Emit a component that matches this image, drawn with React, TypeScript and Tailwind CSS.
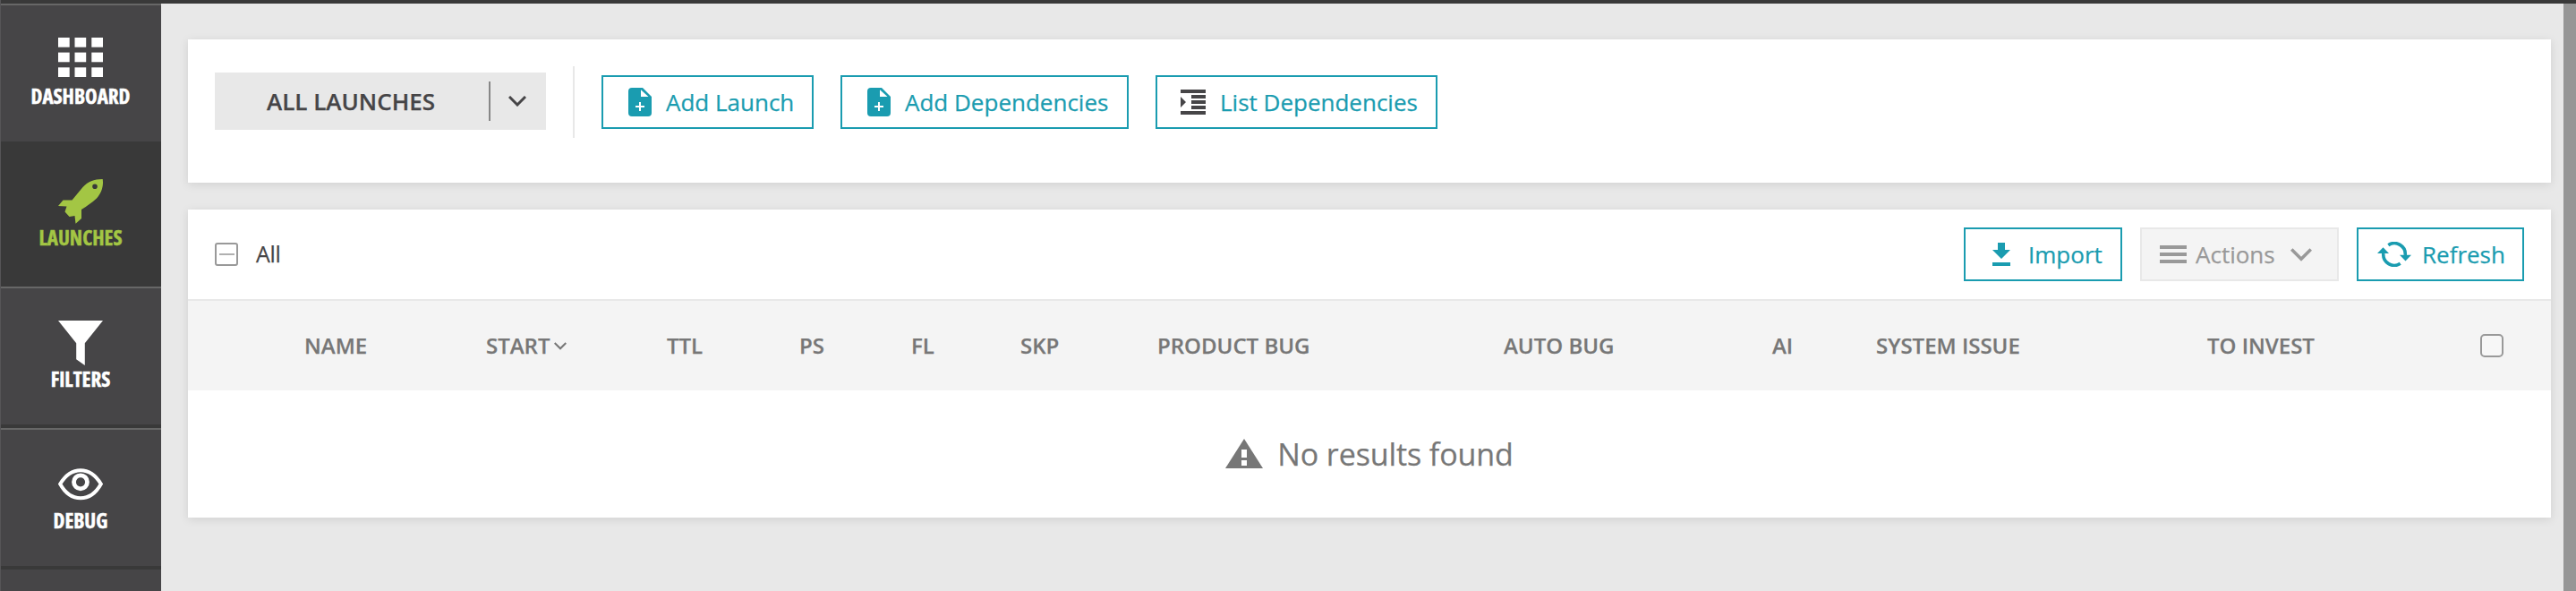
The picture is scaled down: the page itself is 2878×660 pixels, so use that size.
import React from "react";

type IconProps = { className?: string };

const GridIcon = ({ className }: IconProps) => (
  <svg className={className} width="50" height="50" viewBox="0 0 50 50" fill="currentColor">
    {[0, 16.6, 33.3].map((y) =>
      [0, 18.5, 37.3].map((x) => <rect key={`${x}-${y}`} x={x} y={y} width="12.7" height="10.7" />),
    )}
  </svg>
);

const RocketIcon = ({ className }: IconProps) => (
  <svg className={className} width="50" height="50" viewBox="0 0 50 50" fill="currentColor">
    <path
      fillRule="evenodd"
      d="M49.700 0C51 8 48 16 43 21.500C37 27 32 30 26 34V44L19.500 49.700L18.500 41L12.500 42L7.500 36.500L9.500 30.500L0 30L5.500 23.500H15.500L27.500 9C33 3 40 0 49.700 0ZM41 5.500A2.800 2.800 0 1 0 41 11.100A2.800 2.800 0 1 0 41 5.500Z"
    />
  </svg>
);

const FunnelIcon = ({ className }: IconProps) => (
  <svg className={className} width="50" height="50" viewBox="0 0 50 50" fill="currentColor">
    <path d="M0 0H50L29.800 25.300V50L20.200 43.300V25.300Z" />
  </svg>
);

const EyeIcon = ({ className }: IconProps) => (
  <svg className={className} width="50" height="36" viewBox="0 0 50 36" fill="none" stroke="currentColor">
    <path d="M2.200 17.500C8 8 15.500 2.300 25 2.300S42 8 47.800 17.500C42 28 34.500 33.200 25 33.200S8 28 2.200 17.500Z" strokeWidth="4" />
    <circle cx="25" cy="15.300" r="7.500" strokeWidth="4.800" />
  </svg>
);

const AddFileIcon = ({ className }: IconProps) => (
  <svg className={className} width="26" height="32" viewBox="0 0 26 32">
    <path d="M4 0H16L26 10V28A4 4 0 0 1 22 32H4A4 4 0 0 1 0 28V4A4 4 0 0 1 4 0Z" fill="currentColor" />
    <path d="M14 2.300V10H22.500ZM12 16H14V20H18V22H14V26H12V22H8V20H12Z" fill="#fff" />
  </svg>
);

const IndentIcon = ({ className }: IconProps) => (
  <svg className={className} width="28" height="28" viewBox="0 0 28 28" fill="currentColor">
    <path d="M0 0H28V4H0ZM12 6H28V10H12ZM12 12H28V16H12ZM12 18H28V22H12ZM0 24H28V28H0ZM0 8L6 14L0 20Z" />
  </svg>
);

const ImportIcon = ({ className }: IconProps) => (
  <svg className={className} width="20" height="26" viewBox="0 0 20 26" fill="currentColor">
    <path d="M6 0H14V8H20L10 18L0 8H6ZM0 22H20V26H0Z" />
  </svg>
);

const MenuIcon = ({ className }: IconProps) => (
  <svg className={className} width="30" height="20" viewBox="0 0 30 20" fill="currentColor">
    <path d="M0 0H30V4H0ZM0 8H30V12H0ZM0 16H30V20H0Z" />
  </svg>
);

const RefreshIcon = ({ className }: IconProps) => (
  <svg className={className} width="38" height="28" viewBox="0 0 38 28">
    <path d="M12.300 3.700A12.200 12.200 0 0 1 31.200 15M25.700 24.300A12.200 12.200 0 0 1 6.800 13" fill="none" stroke="currentColor" strokeWidth="3.600" />
    <path d="M25 14.700H38L31.500 21.500ZM0 13H13L6.500 6.200Z" fill="currentColor" />
  </svg>
);

const WarningIcon = ({ className }: IconProps) => (
  <svg className={className} width="42" height="33" viewBox="0 0 42 33">
    <path d="M21 0L42 33H0Z" fill="currentColor" />
    <path d="M18 12H24V21H18ZM18 24H24V30H18Z" fill="#fff" />
  </svg>
);

const Chevron = ({ className }: IconProps) => (
  <svg className={className} viewBox="0 0 20 12" fill="none" stroke="currentColor" strokeWidth="3">
    <path d="M1 1L10 10L19 1" />
  </svg>
);

const NavItem = ({ label, icon, active }: { label: string; icon: React.ReactNode; active?: boolean }) => (
  <a
    className={
      active
        ? "flex h-[158px] shrink-0 flex-col items-center bg-[#393939] pt-[38px] pr-px text-[#a3c644]"
        : "flex h-[158px] shrink-0 flex-col items-center border-t-2 border-b-4 border-t-[#676767] border-b-[#393939] bg-[#464547] pt-9 pr-px text-white"
    }
  >
    <span className="flex h-[50px] items-center">{icon}</span>
    <span className="-mt-px text-[23px] leading-8 font-bold [font-stretch:75%] [-webkit-text-stroke:0.5px_currentColor]">{label}</span>
  </a>
);

const OutlineButton = ({ className, children }: { className: string; children: React.ReactNode }) => (
  <button className={`flex h-[60px] items-center border-2 border-[#1a9cb0] bg-white text-[26px] whitespace-nowrap text-[#1a9cb0] ${className}`}>
    {children}
  </button>
);

export default function App() {
  return (
    <div className="flex h-[660px] w-[2878px] overflow-hidden bg-[#e8e8e8] font-['Open_Sans','Noto_Sans',sans-serif] [-webkit-text-stroke:0.25px_currentColor]">
      <nav className="flex w-[180px] shrink-0 flex-col border-l border-[#565557] bg-[#464547]">
        <div className="h-1 shrink-0 bg-[#393939]" />
        <NavItem label="DASHBOARD" icon={<GridIcon />} />
        <NavItem label="LAUNCHES" icon={<RocketIcon />} active />
        <NavItem label="FILTERS" icon={<FunnelIcon />} />
        <NavItem label="DEBUG" icon={<EyeIcon />} />
      </nav>

      <div className="flex min-w-0 flex-1 flex-col">
        <div className="h-1 shrink-0 bg-[#393939]" />
        <div className="flex flex-1">
          <main className="flex flex-1 flex-col gap-[30px] pt-10 pr-[14px] pl-[30px]">
            <section className="flex h-40 bg-white pt-[30px] pl-[30px] shadow-[0_2px_10px_rgba(0,0,0,0.1)]">
              <div className="mt-[7px] flex h-16 w-[370px] items-center bg-[#e8e8e8] text-[#464547]">
                <span className="w-[306px] pl-[58px] text-[26px] font-semibold">ALL LAUNCHES</span>
                <span className="h-11 w-0.5 bg-[#878787]" />
                <Chevron className="ml-5 h-3 w-5" />
              </div>
              <div className="ml-[30px] h-20 w-0.5 bg-[#e8e8e8]" />
              <div className="mt-2.5 ml-[30px] flex gap-[30px]">
                <OutlineButton className="w-[237px] gap-4 pl-7">
                  <AddFileIcon />
                  Add Launch
                </OutlineButton>
                <OutlineButton className="w-[322px] gap-4 pl-7">
                  <AddFileIcon />
                  Add Dependencies
                </OutlineButton>
                <OutlineButton className="w-[315px] gap-4 pl-[26px]">
                  <IndentIcon className="text-[#464547]" />
                  List Dependencies
                </OutlineButton>
              </div>
            </section>

            <section className="flex h-[344px] flex-col bg-white shadow-[0_2px_10px_rgba(0,0,0,0.1)]">
              <div className="flex h-[102px] shrink-0 items-center border-b-2 border-[#e8e8e8] pr-[30px] pl-[30px]">
                <span className="flex size-[26px] items-center justify-center rounded-[3px] border-2 border-[#999]">
                  <span className="h-0.5 w-[17px] bg-[#b0b0b0]" />
                </span>
                <span className="ml-5 text-[25px] tracking-[-0.3px] text-[#464547]">All</span>
                <div className="ml-auto flex gap-5">
                  <OutlineButton className="w-[177px] gap-5 pl-[30px]">
                    <ImportIcon />
                    Import
                  </OutlineButton>
                  <button className="flex h-[60px] w-[222px] items-center border-2 border-[#e8e8e8] bg-[#f4f4f4] pl-5 text-[26px] text-[#999]">
                    <MenuIcon />
                    <span className="ml-2.5">Actions</span>
                    <Chevron className="ml-[17px] h-[15px] w-6" />
                  </button>
                  <OutlineButton className="w-[187px] gap-3 pl-[21px]">
                    <RefreshIcon />
                    Refresh
                  </OutlineButton>
                </div>
              </div>

              <div className="grid h-[100px] shrink-0 grid-cols-[203px_202px_148px_125px_122px_153px_387px_300px_116px_370px_305px_26px] items-center bg-[#f4f4f4] pl-[130px] text-[24px] font-semibold whitespace-nowrap text-[#777]">
                <span>NAME</span>
                <span className="flex items-center gap-1">
                  START
                  <Chevron className="h-[9px] w-[14px]" />
                </span>
                <span>TTL</span>
                <span>PS</span>
                <span>FL</span>
                <span>SKP</span>
                <span>PRODUCT BUG</span>
                <span>AUTO BUG</span>
                <span>AI</span>
                <span>SYSTEM ISSUE</span>
                <span>TO INVEST</span>
                <span className="size-[26px] rounded-[5px] border-2 border-[#999] bg-[#f7f7f7]" />
              </div>

              <div className="flex flex-1 items-center justify-center gap-4 text-[34px] tracking-[-0.1px] text-[#777]">
                <WarningIcon className="-mt-px" />
                No results found
              </div>
            </section>
          </main>
          <div className="w-[14px] bg-[#969696]" />
        </div>
      </div>
    </div>
  );
}
